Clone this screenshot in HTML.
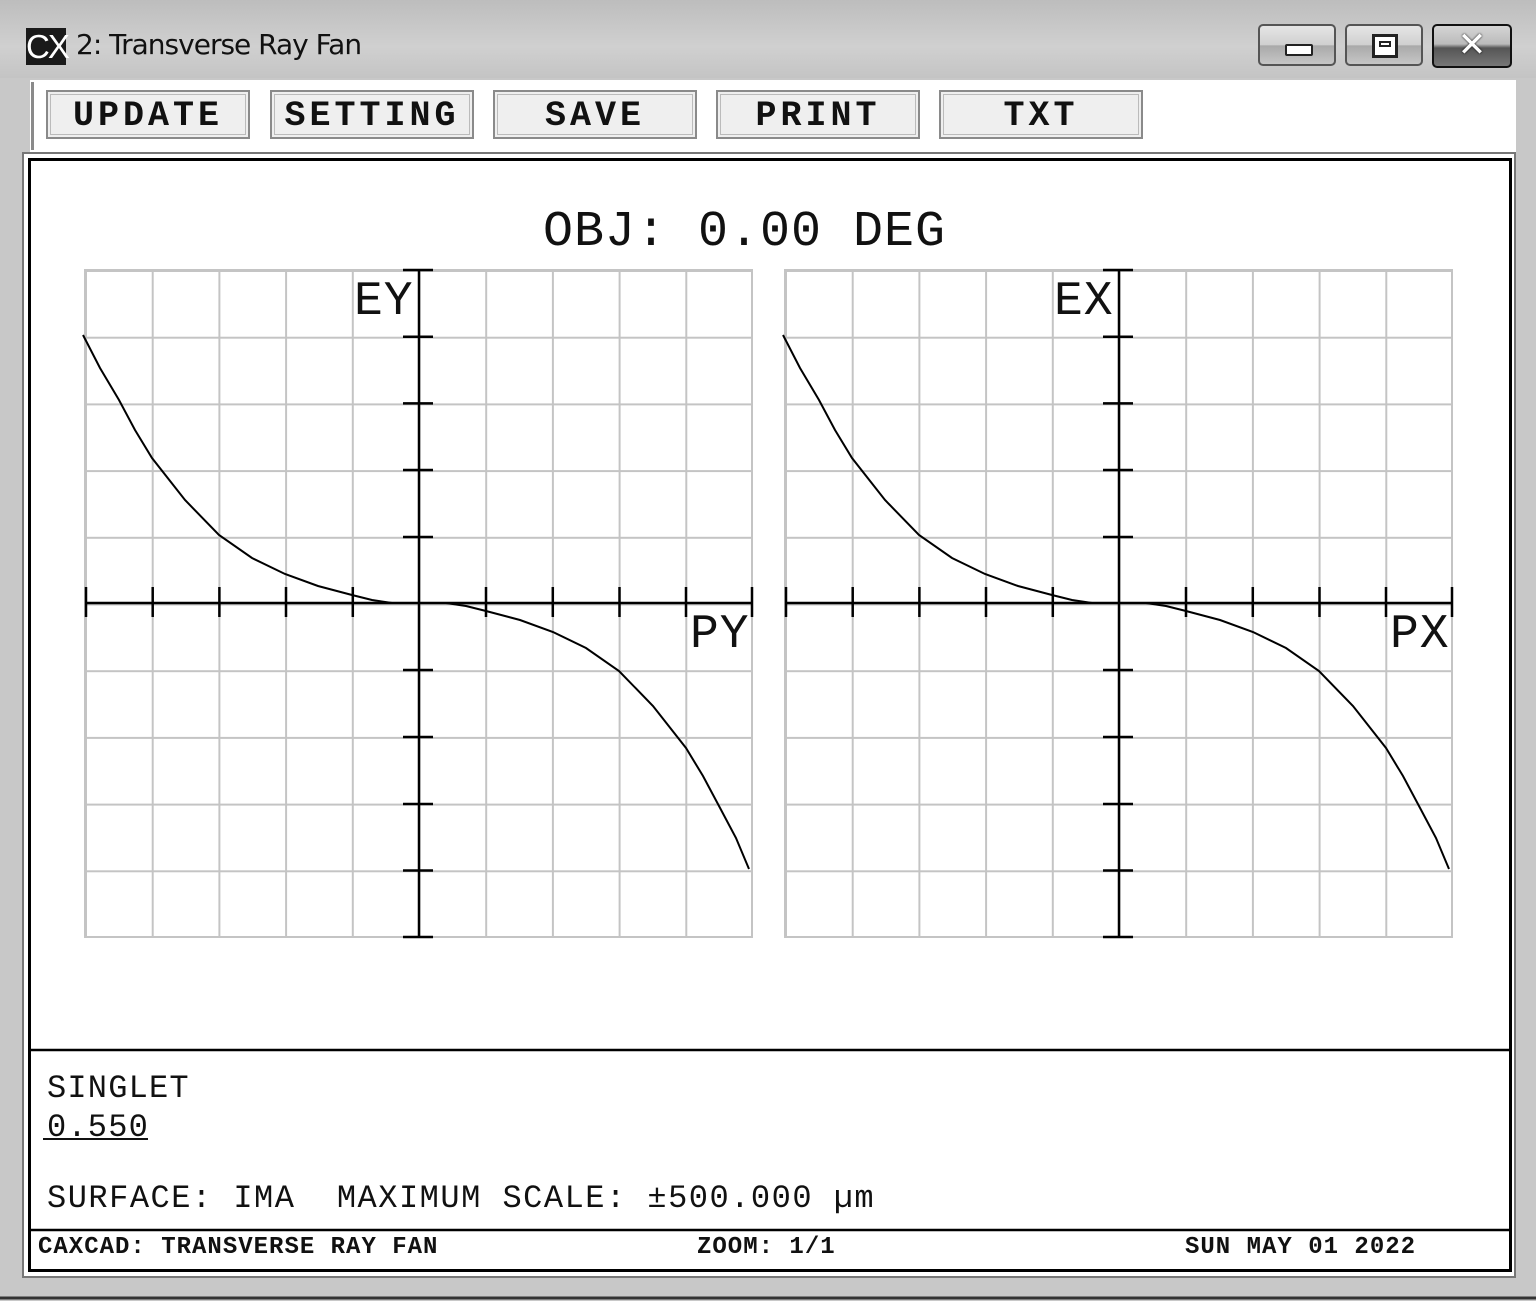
<!DOCTYPE html>
<html><head><meta charset="utf-8"><style>
html,body{margin:0;padding:0}
body{width:1536px;height:1301px;position:relative;overflow:hidden;background:#c8c8c8;font-family:"Liberation Mono",monospace}
.t{position:absolute;white-space:pre;color:#111;line-height:1}
.btn{position:absolute;top:90px;width:204px;height:49px;background:#efefef;border:2px solid #8a8a8a;outline:1px solid #bbb;outline-offset:-5px;box-sizing:border-box;font-size:35px;font-weight:bold;letter-spacing:4px;text-align:center;line-height:49px;color:#111}
</style></head><body>
<div style="position:absolute;left:0;top:0;width:1536px;height:78px;background:linear-gradient(#bdbdbd,#d0d0d0 60%,#c4c4c4)"></div>
<div style="position:absolute;left:26px;top:28px;width:40px;height:37px;background:#1a1a1a;color:#fff;font-family:'Liberation Sans',sans-serif;font-size:33px;line-height:37px;text-align:center;letter-spacing:-2px">CX</div>
<div class="t" style="left:76px;top:31px;font-family:'DejaVu Sans',sans-serif;font-size:28px;letter-spacing:-1px">2: Transverse Ray Fan</div>
<div style="position:absolute;left:1258px;top:24px;width:78px;height:42px;border:2px solid #555;border-radius:5px;box-sizing:border-box;background:linear-gradient(#e6e6e6,#cfcfcf 50%,#a9a9a9 52%,#c6c6c6)"><div style="position:absolute;left:25px;top:18px;width:24px;height:8px;background:#fff;border:2px solid #222;border-radius:2px"></div></div>
<div style="position:absolute;left:1345px;top:24px;width:78px;height:42px;border:2px solid #555;border-radius:5px;box-sizing:border-box;background:linear-gradient(#e6e6e6,#cfcfcf 50%,#a9a9a9 52%,#c6c6c6)"><div style="position:absolute;left:25px;top:8px;width:20px;height:18px;background:#fff;border:3px solid #222"><div style="position:absolute;left:4px;top:4px;width:12px;height:6px;border:2px solid #222;box-sizing:border-box"></div></div></div>
<div style="position:absolute;left:1432px;top:24px;width:80px;height:44px;border:2px solid #111;border-radius:5px;box-sizing:border-box;background:linear-gradient(#d5d5d5,#bbb 45%,#555 55%,#777);color:#fff;font-family:'DejaVu Sans',sans-serif;font-weight:bold;font-size:34px;text-align:center;line-height:38px;text-shadow:0 0 2px #000">✕</div>
<div style="position:absolute;left:30px;top:80px;width:1486px;height:72px;background:#fff"></div>
<div style="position:absolute;left:31px;top:82px;width:3px;height:68px;background:#8a8a8a"></div>
<div class="btn" style="left:46px">UPDATE</div>
<div class="btn" style="left:270px">SETTING</div>
<div class="btn" style="left:493px">SAVE</div>
<div class="btn" style="left:716px">PRINT</div>
<div class="btn" style="left:939px">TXT</div>
<svg width="1536" height="1301" style="position:absolute;left:0;top:0">
<rect x="23" y="153" width="1492" height="1124" fill="#fff" stroke="#777" stroke-width="2"/>
<rect x="29.5" y="159.5" width="1481" height="1111" fill="#fff" stroke="#000" stroke-width="3"/>
<line x1="29" y1="1050" x2="1511" y2="1050" stroke="#000" stroke-width="2.5"/>
<line x1="29" y1="1230" x2="1511" y2="1230" stroke="#000" stroke-width="2.5"/>
<line x1="0" y1="1298" x2="1536" y2="1298" stroke="#333" stroke-width="3"/>
<defs>
<pattern id="g1" x="85" y="270" width="66.7" height="66.7" patternUnits="userSpaceOnUse"><path d="M1 0V66.7M0 1H66.7" stroke="#c4c4c4" stroke-width="2" fill="none"/></pattern>
<pattern id="g2" x="785" y="270" width="66.7" height="66.7" patternUnits="userSpaceOnUse"><path d="M1 0V66.7M0 1H66.7" stroke="#c4c4c4" stroke-width="2" fill="none"/></pattern>
<g id="ax" stroke="#000" stroke-width="2.5" fill="none">
<line x1="419" y1="269" x2="419" y2="938"/>
<line x1="85" y1="603" x2="753" y2="603"/>
<path d="M403 270H433M403 336.7H433M403 403.4H433M403 470H433M403 537H433M403 670H433M403 737H433M403 804H433M403 870.5H433M403 937H433"/>
<path d="M86 587V617M152.7 587V617M219.4 587V617M286 587V617M352.8 587V617M486 587V617M552.8 587V617M619.5 587V617M686 587V617M752 587V617"/>
<path stroke-width="2" d="M83 335L100 368L119 400L135 430L152 458L185 500L219 535L252 558L285 574L318 586L352 595L372 600L392 603"/>
<path stroke-width="2" d="M446 603L466 606L486 611L520 620L553 632L586 648L619 671L653 706L686 748L703 776L719 806L736 838L749 869"/>
</g>
</defs>
<rect x="85" y="270" width="667" height="667" fill="url(#g1)" stroke="#c4c4c4" stroke-width="2"/>
<rect x="785" y="270" width="667" height="667" fill="url(#g2)" stroke="#c4c4c4" stroke-width="2"/>
<use href="#ax"/>
<use href="#ax" x="700"/>
</svg>
<div class="t" style="left:543px;top:208px;font-size:50px;letter-spacing:1px">OBJ: 0.00 DEG</div>
<div class="t" style="left:354px;top:278px;font-size:48px;letter-spacing:1px">EY</div>
<div class="t" style="left:1054px;top:278px;font-size:48px;letter-spacing:1px">EX</div>
<div class="t" style="left:690px;top:611px;font-size:48px;letter-spacing:1px">PY</div>
<div class="t" style="left:1390px;top:611px;font-size:48px;letter-spacing:1px">PX</div>
<div class="t" style="left:47px;top:1073px;font-size:32px;letter-spacing:1.2px">SINGLET</div>
<div class="t" style="left:47px;top:1112px;font-size:32px;letter-spacing:1.2px">0.550</div>
<div style="position:absolute;left:43px;top:1138px;width:105px;height:2px;background:#111"></div>
<div class="t" style="left:47px;top:1183px;font-size:32px;letter-spacing:1.5px">SURFACE: IMA  MAXIMUM SCALE: ±500.000 µm</div>
<div class="t" style="left:38px;top:1236px;font-size:24px;font-weight:bold;letter-spacing:1px">CAXCAD: TRANSVERSE RAY FAN</div>
<div class="t" style="left:697px;top:1236px;font-size:24px;font-weight:bold;letter-spacing:1px">ZOOM: 1/1</div>
<div class="t" style="left:1185px;top:1236px;font-size:24px;font-weight:bold;letter-spacing:1px">SUN MAY 01 2022</div>
</body></html>
